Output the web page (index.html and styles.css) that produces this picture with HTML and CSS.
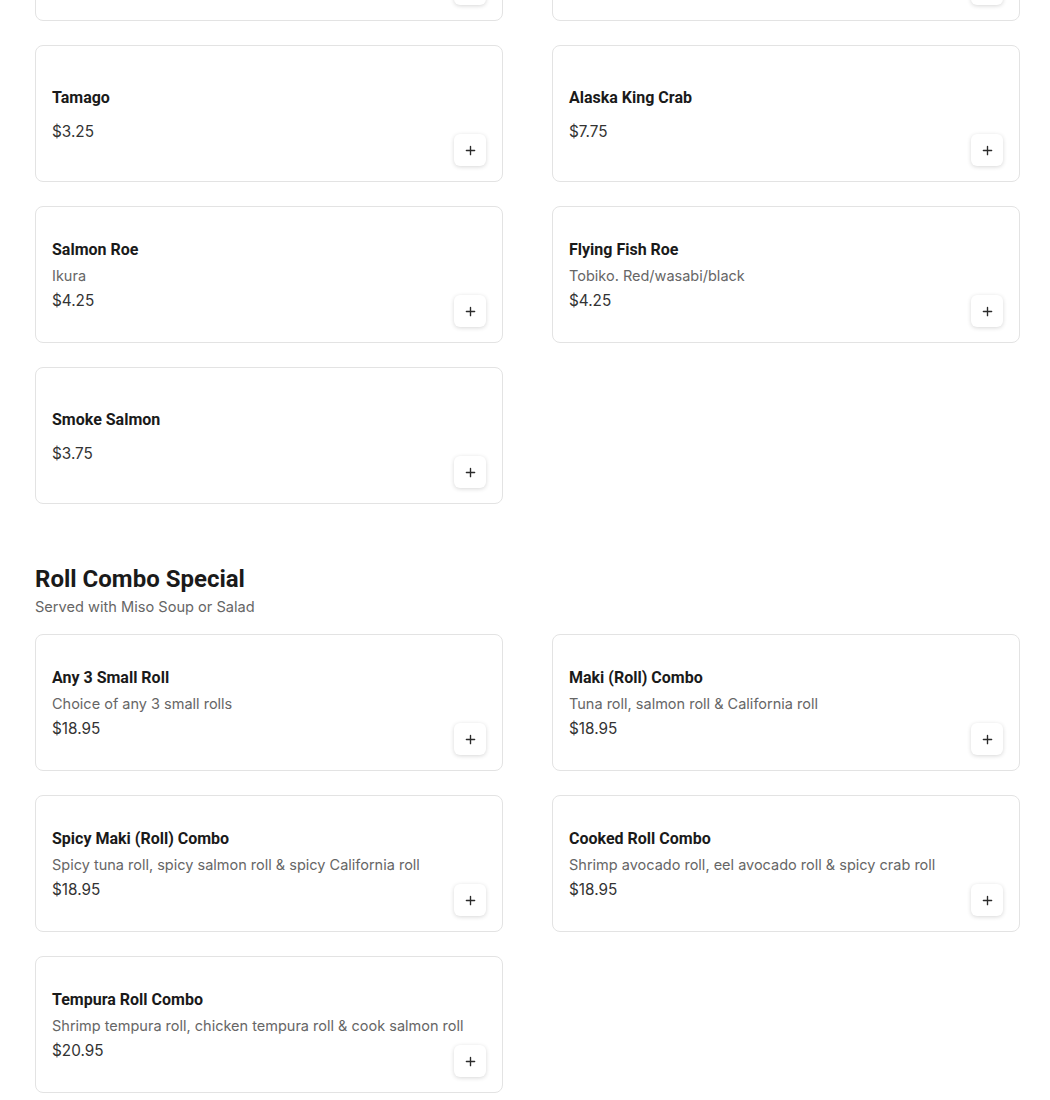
FILE: index.html
```html
<!DOCTYPE html>
<html>
<head>
<meta charset="utf-8">
<link rel="stylesheet" href="styles.css">
</head>
<body>
<main class="menu">
  <section class="section section-scrolled">
    <div class="grid">
      <div class="card">
        <div class="info"><div class="name">Octopus</div><div class="price">$3.75</div></div>
        <button class="add"><svg viewBox="0 0 12 12" width="12" height="12"><path d="M6 1.5v9M1.5 6h9" stroke="#2b2b2b" stroke-width="1.5" stroke-linecap="round"/></svg></button>
      </div>
      <div class="card">
        <div class="info"><div class="name">Sea Urchin</div><div class="price">$7.25</div></div>
        <button class="add"><svg viewBox="0 0 12 12" width="12" height="12"><path d="M6 1.5v9M1.5 6h9" stroke="#2b2b2b" stroke-width="1.5" stroke-linecap="round"/></svg></button>
      </div>
      <div class="card">
        <div class="info"><div class="name">Tamago</div><div class="price">$3.25</div></div>
        <button class="add"><svg viewBox="0 0 12 12" width="12" height="12"><path d="M6 1.5v9M1.5 6h9" stroke="#2b2b2b" stroke-width="1.5" stroke-linecap="round"/></svg></button>
      </div>
      <div class="card">
        <div class="info"><div class="name">Alaska King Crab</div><div class="price">$7.75</div></div>
        <button class="add"><svg viewBox="0 0 12 12" width="12" height="12"><path d="M6 1.5v9M1.5 6h9" stroke="#2b2b2b" stroke-width="1.5" stroke-linecap="round"/></svg></button>
      </div>
      <div class="card">
        <div class="info"><div class="name">Salmon Roe</div><div class="desc">Ikura</div><div class="price">$4.25</div></div>
        <button class="add"><svg viewBox="0 0 12 12" width="12" height="12"><path d="M6 1.5v9M1.5 6h9" stroke="#2b2b2b" stroke-width="1.5" stroke-linecap="round"/></svg></button>
      </div>
      <div class="card">
        <div class="info"><div class="name">Flying Fish Roe</div><div class="desc">Tobiko. Red/wasabi/black</div><div class="price">$4.25</div></div>
        <button class="add"><svg viewBox="0 0 12 12" width="12" height="12"><path d="M6 1.5v9M1.5 6h9" stroke="#2b2b2b" stroke-width="1.5" stroke-linecap="round"/></svg></button>
      </div>
      <div class="card">
        <div class="info"><div class="name">Smoke Salmon</div><div class="price">$3.75</div></div>
        <button class="add"><svg viewBox="0 0 12 12" width="12" height="12"><path d="M6 1.5v9M1.5 6h9" stroke="#2b2b2b" stroke-width="1.5" stroke-linecap="round"/></svg></button>
      </div>
    </div>
  </section>

  <section class="section">
    <h2 class="section-title">Roll Combo Special</h2>
    <p class="section-sub">Served with Miso Soup or Salad</p>
    <div class="grid">
      <div class="card">
        <div class="info"><div class="name">Any 3 Small Roll</div><div class="desc">Choice of any 3 small rolls</div><div class="price">$18.95</div></div>
        <button class="add"><svg viewBox="0 0 12 12" width="12" height="12"><path d="M6 1.5v9M1.5 6h9" stroke="#2b2b2b" stroke-width="1.5" stroke-linecap="round"/></svg></button>
      </div>
      <div class="card">
        <div class="info"><div class="name">Maki (Roll) Combo</div><div class="desc">Tuna roll, salmon roll &amp; California roll</div><div class="price">$18.95</div></div>
        <button class="add"><svg viewBox="0 0 12 12" width="12" height="12"><path d="M6 1.5v9M1.5 6h9" stroke="#2b2b2b" stroke-width="1.5" stroke-linecap="round"/></svg></button>
      </div>
      <div class="card">
        <div class="info"><div class="name">Spicy Maki (Roll) Combo</div><div class="desc">Spicy tuna roll, spicy salmon roll &amp; spicy California roll</div><div class="price">$18.95</div></div>
        <button class="add"><svg viewBox="0 0 12 12" width="12" height="12"><path d="M6 1.5v9M1.5 6h9" stroke="#2b2b2b" stroke-width="1.5" stroke-linecap="round"/></svg></button>
      </div>
      <div class="card">
        <div class="info"><div class="name">Cooked Roll Combo</div><div class="desc">Shrimp avocado roll, eel avocado roll &amp; spicy crab roll</div><div class="price">$18.95</div></div>
        <button class="add"><svg viewBox="0 0 12 12" width="12" height="12"><path d="M6 1.5v9M1.5 6h9" stroke="#2b2b2b" stroke-width="1.5" stroke-linecap="round"/></svg></button>
      </div>
      <div class="card">
        <div class="info"><div class="name">Tempura Roll Combo</div><div class="desc">Shrimp tempura roll, chicken tempura roll &amp; cook salmon roll</div><div class="price">$20.95</div></div>
        <button class="add"><svg viewBox="0 0 12 12" width="12" height="12"><path d="M6 1.5v9M1.5 6h9" stroke="#2b2b2b" stroke-width="1.5" stroke-linecap="round"/></svg></button>
      </div>
    </div>
  </section>
</main>
</body>
</html>
```

FILE: styles.css
```css
* { box-sizing: border-box; }
html, body { margin: 0; padding: 0; background: #fff; }
body { font-family: "Inter", "Open Sans", sans-serif; color: #1a1a1a; }

.menu {
  width: 985px;
  margin-left: 35px;
  padding-bottom: 40px;
}

.section-scrolled { margin-top: -116px; }

.section + .section { margin-top: 59px; }

.section-title {
  margin: 0;
  font-family: "Roboto", sans-serif;
  font-weight: 700;
  font-size: 24px;
  line-height: 32px;
  color: #1a1a1a;
}

.section-sub {
  margin: 2px 0 17px;
  font-size: 14.6px;
  line-height: 20px;
  color: #666;
}

.grid {
  display: grid;
  grid-template-columns: 1fr 1fr;
  column-gap: 49px;
  row-gap: 24px;
}

.card {
  height: 137px;
  border: 1px solid #e3e3e3;
  border-radius: 8px;
  padding: 19px 16px 15px;
  display: grid;
  grid-template-columns: 1fr;
  grid-template-rows: 1fr;
  background: #fff;
}

.info {
  grid-area: 1 / 1;
  display: flex;
  flex-direction: column;
  justify-content: center;
  min-width: 0;
}

.name {
  font-family: "Roboto", sans-serif;
  font-weight: 700;
  font-size: 16px;
  line-height: 20px;
  color: #1a1a1a;
  margin-bottom: 12px;
}

.desc {
  font-size: 14.5px;
  line-height: 20px;
  color: #666;
  margin-top: -6px;
  margin-bottom: 3px;
  white-space: nowrap;
}

.price {
  font-size: 15.3px;
  line-height: 24px;
  color: #333;
}

.add {
  grid-area: 1 / 1;
  justify-self: end;
  align-self: end;
  width: 32px;
  height: 32px;
  padding: 0;
  border: none;
  border-radius: 6px;
  background: #fff;
  box-shadow: 0 1px 4px rgba(0, 0, 0, 0.16);
  display: flex;
  align-items: center;
  justify-content: center;
}

.add svg { display: block; width: 11px; height: 11px; }
```
